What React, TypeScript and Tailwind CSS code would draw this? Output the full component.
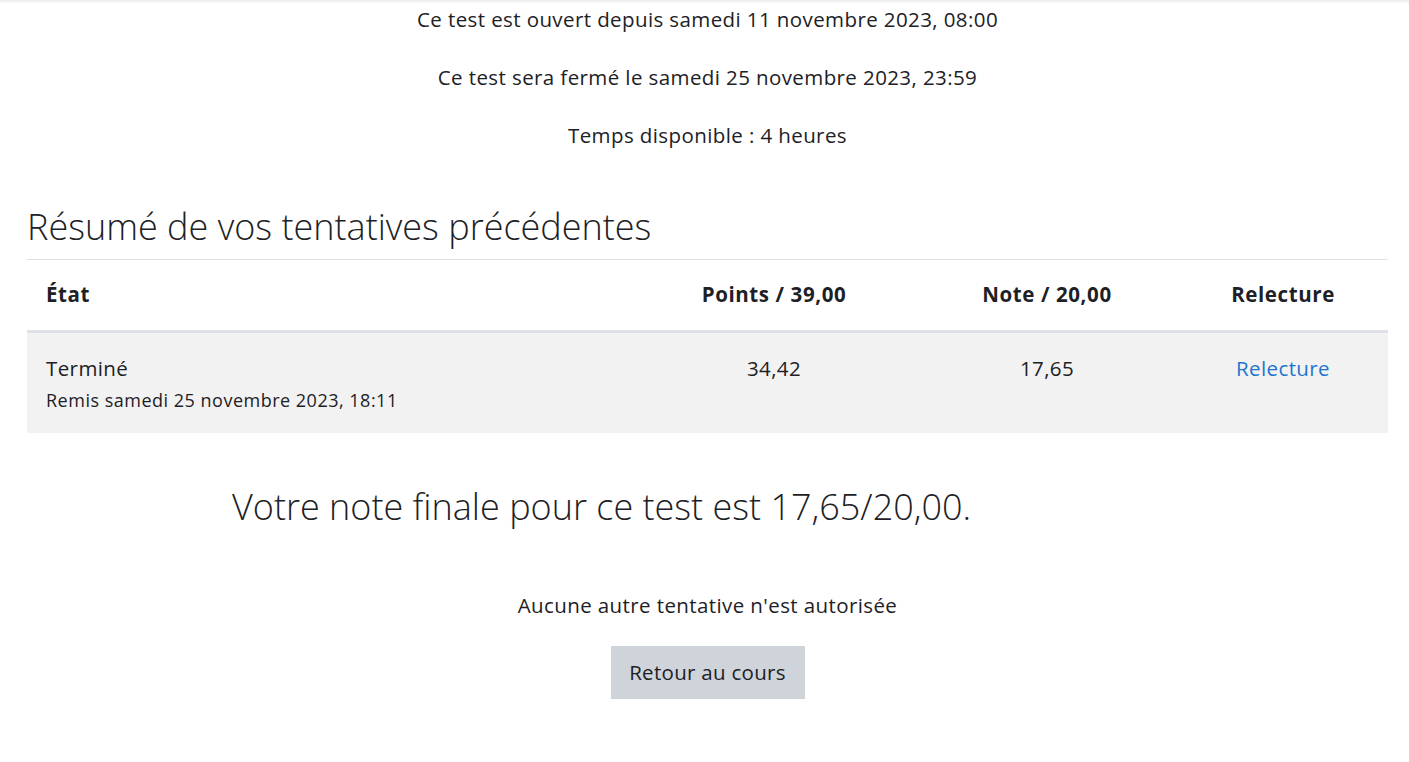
export default function App() {
  const font = { fontFamily: '"Open Sans", "Noto Sans", sans-serif' };
  return (
    <div className="min-h-screen bg-white text-[#1d2125]" style={font}>
      <div className="h-[4px] bg-gradient-to-b from-[#ececec] to-white" />
      <div className="ml-[27px] mr-[21px]">
        {/* Infos du test */}
        <div className="text-center text-[20.5px] leading-[30px] tracking-[0.4px]">
          <p>Ce test est ouvert depuis samedi 11 novembre 2023, 08:00</p>
          <p className="mt-[28px]">Ce test sera fermé le samedi 25 novembre 2023, 23:59</p>
          <p className="mt-[28px]">Temps disponible : 4 heures</p>
        </div>

        {/* Résumé */}
        <h3 className="mt-[56px] mb-[11px] text-[36px] leading-[42px] font-light">
          Résumé de vos tentatives précédentes
        </h3>
        <div className="border-t border-[#dee2e6]">
          <div className="grid grid-cols-[605px_284px_262px_1fr] h-[73px] pb-[1px] items-center border-b-[3px] border-[#dee2e6] text-[20.5px] tracking-[0.6px] font-bold">
            <div className="pl-[19px]">État</div>
            <div className="text-center">Points / 39,00</div>
            <div className="text-center">Note / 20,00</div>
            <div className="text-center">Relecture</div>
          </div>
          <div className="grid grid-cols-[605px_284px_262px_1fr] h-[100px] bg-[#f2f2f2] text-[20.5px] tracking-[0.4px] pt-[20px]">
            <div className="pl-[19px]">
              <div className="leading-[30px]">Terminé</div>
              <div className="text-[18px] tracking-[0.5px] leading-[34px]">Remis samedi 25 novembre 2023, 18:11</div>
            </div>
            <div className="text-center leading-[30px]">34,42</div>
            <div className="text-center leading-[30px]">17,65</div>
            <div className="text-center leading-[30px]">
              <a href="#" className="text-[#1f74cf]">Relecture</a>
            </div>
          </div>
        </div>

        {/* Note finale */}
        <h3 className="mt-[49px] pl-[205px] text-[36px] leading-[50px] font-light">
          Votre note finale pour ce test est 17,65/20,00.
        </h3>

        <div className="mt-[58px] flex flex-col items-center">
          <p className="text-[20.5px] leading-[30px] tracking-[0.4px]">Aucune autre tentative n'est autorisée</p>
          <button className="mt-[26px] h-[53px] w-[194px] bg-[#ced4da] text-[20.5px] tracking-[0.3px] text-[#1d2125]">
            Retour au cours
          </button>
        </div>
      </div>
    </div>
  );
}
